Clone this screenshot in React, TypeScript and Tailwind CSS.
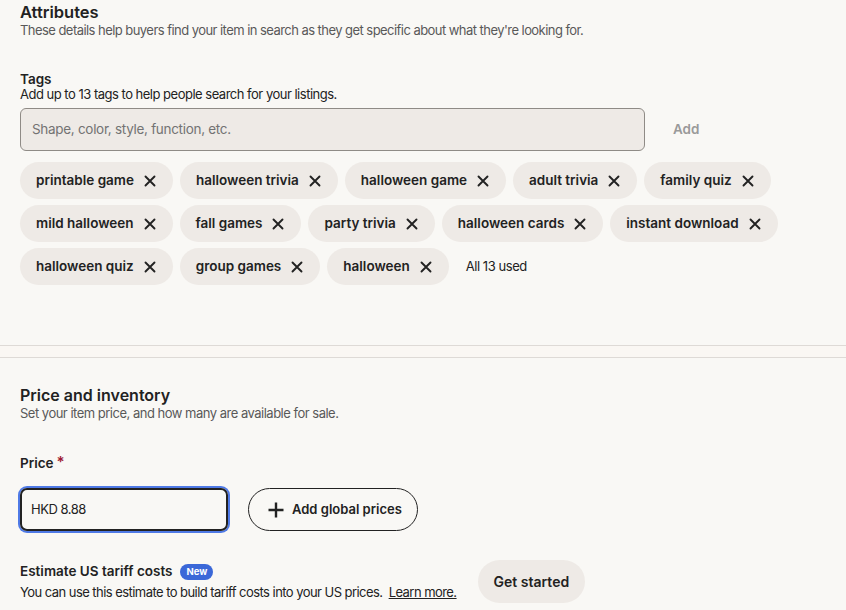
const TAGS: string[][] = [
  ["printable game", "halloween trivia", "halloween game", "adult trivia", "family quiz"],
  ["mild halloween", "fall games", "party trivia", "halloween cards", "instant download"],
  ["halloween quiz", "group games", "halloween"],
];

const CloseIcon = () => (
  <svg width="12" height="12" viewBox="0 0 12 12" fill="none" stroke="#222" strokeWidth="1.9" strokeLinecap="round">
    <path d="M1.5 1.5L10.5 10.5M10.5 1.5L1.5 10.5" />
  </svg>
);

const PlusIcon = () => (
  <svg width="18" height="18" viewBox="0 0 18 18" fill="none" stroke="#222" strokeWidth="2.4">
    <path d="M9 1.5V16.5M1.5 9H16.5" />
  </svg>
);

const TagChip = ({ label }: { label: string }) => (
  <div className="flex h-[37px] items-center gap-[10px] rounded-full bg-[#eeeae6] pl-4 pr-[17px]">
    <span className="text-[13.5px] font-semibold text-[#222]">{label}</span>
    <CloseIcon />
  </div>
);

const App = () => {
  return (
    <div className="min-h-[610px] w-[846px] bg-[#f9f8f5] font-['Inter',sans-serif] text-[#222]">
      <section className="px-5 pb-[60px]">
        <h2 className="pt-[2px] text-[16.5px] leading-[20px] font-semibold">Attributes</h2>
        <p className="text-[13px] leading-[17px] tracking-[-0.55px] text-[#595959]">
          These details help buyers find your item in search as they get specific about what they're looking for.
        </p>

        <div className="mt-[32px]">
          <h3 className="text-[13.5px] leading-[16px] font-semibold">Tags</h3>
          <p className="text-[13px] leading-[15px] tracking-[-0.5px] text-[#222]">
            Add up to 13 tags to help people search for your listings.
          </p>
        </div>

        <div className="mt-[6px] flex items-center">
          <div className="flex h-[43px] w-[625px] items-center rounded-[6px] border border-[#8f8b86] bg-[#eeeae6] px-[11px]">
            <span className="text-[13.5px] tracking-[-0.3px] text-[#737373]">Shape, color, style, function, etc.</span>
          </div>
          <span className="ml-[28px] text-[13.5px] font-semibold text-[#9a9a9a]">Add</span>
        </div>

        <div className="mt-[11px] flex flex-col gap-[6px]">
          {TAGS.map((row, i) => (
            <div key={i} className="flex items-center gap-[7px]">
              {row.map((t) => (
                <TagChip key={t} label={t} />
              ))}
              {i === 2 && (
                <span className="ml-[10px] text-[13px] tracking-[-0.45px] text-[#222]">All 13 used</span>
              )}
            </div>
          ))}
        </div>
      </section>

      <div className="h-[13px] border-y border-[#dedad6] bg-[#faf7f3]" />

      <section className="px-5 pt-[27px]">
        <h2 className="text-[16px] leading-[20px] font-semibold">Price and inventory</h2>
        <p className="text-[13px] leading-[16px] tracking-[-0.5px] text-[#595959]">
          Set your item price, and how many are available for sale.
        </p>

        <div className="mt-[34px] flex h-[17px] items-center gap-[3px]">
          <span className="text-[13.5px] font-semibold">Price</span>
          <span className="-mt-[5px] text-[15px] leading-[15px] font-semibold text-[#9e1b32]">*</span>
        </div>

        <div className="mt-[16px] flex items-center gap-5">
          <div className="flex h-[43px] w-[208px] items-center rounded-[7px] border-2 border-[#222] px-[9px] shadow-[0_0_0_2px_#4f7ae6]">
            <span className="text-[13px] tracking-[-0.5px] text-[#222]">HKD 8.88</span>
          </div>
          <button className="flex h-[43px] items-center gap-[7px] rounded-full border border-[#222] pl-[18px] pr-[15px]">
            <PlusIcon />
            <span className="text-[13px] font-semibold">Add global prices</span>
          </button>
        </div>

        <div className="mt-[29px] flex items-center">
          <div>
            <div className="flex h-[18px] items-center gap-2">
              <span className="text-[13.5px] font-semibold">Estimate US tariff costs</span>
              <span className="rounded-full bg-[#3b68d8] px-[6px] text-[9.5px] leading-[16px] font-bold text-white">New</span>
            </div>
            <p className="mt-[2px] text-[13px] leading-[18px] tracking-[-0.55px] text-[#222]">
              You can use this estimate to build tariff costs into your US prices.{" "}
              <a className="ml-[3px] underline">Learn more.</a>
            </p>
          </div>
          <button className="ml-[21px] flex h-[43px] items-center rounded-full bg-[#eeeae6] px-4 text-[14px] font-semibold text-[#222]">
            Get started
          </button>
        </div>
      </section>
    </div>
  );
};

export default App;
